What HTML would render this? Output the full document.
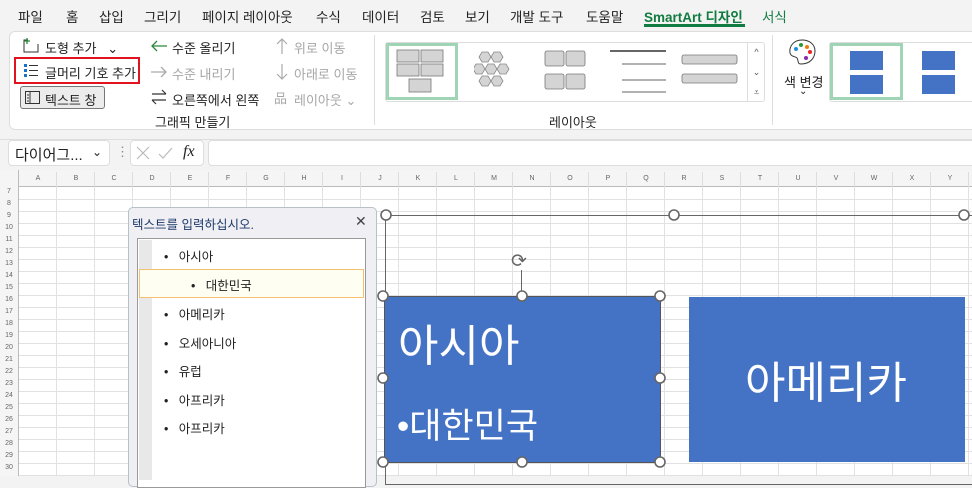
<!DOCTYPE html><html><head><meta charset="utf-8"><style>
*{margin:0;padding:0;box-sizing:border-box}
body{width:972px;height:476px;overflow:hidden;background:#f3f3f3;font-family:"Liberation Sans","Noto Sans CJK KR",sans-serif;font-size:13px;color:#222;position:relative}
.a{position:absolute;white-space:nowrap}
.g{color:#a6a6a6}
.tab{top:6px;font-size:13.5px}
</style></head><body>
<!-- tabs -->
<div class="a tab" style="left:18px">파일</div>
<div class="a tab" style="left:66px">홈</div>
<div class="a tab" style="left:99px">삽입</div>
<div class="a tab" style="left:144px">그리기</div>
<div class="a tab" style="left:202px">페이지 레이아웃</div>
<div class="a tab" style="left:316px">수식</div>
<div class="a tab" style="left:362px">데이터</div>
<div class="a tab" style="left:420px">검토</div>
<div class="a tab" style="left:465px">보기</div>
<div class="a tab" style="left:510px">개발 도구</div>
<div class="a tab" style="left:586px">도움말</div>
<div class="a tab" style="left:644px;color:#107c41;font-weight:bold">SmartArt 디자인</div>
<div class="a" style="left:644px;top:24px;width:101px;height:3px;background:#107c41"></div>
<div class="a tab" style="left:762px;color:#107c41">서식</div>
<!-- ribbon -->
<div class="a" style="left:9px;top:31px;width:975px;height:99px;background:#fff;border:1px solid #ddd;border-radius:6px"></div>
<svg class="a" style="left:22px;top:37px" width="20" height="18"><path d="M6 3H2v12h14V7" fill="none" stroke="#333"/><path d="M5 1v6M2 4h6" stroke="#2a8a3a" stroke-width="1.3"/></svg>
<div class="a" style="left:45px;top:38px">도형 추가 &nbsp;&nbsp;⌄</div>
<div class="a" style="left:14px;top:57px;width:126px;height:27px;border:2px solid #e0131f"></div>
<svg class="a" style="left:23px;top:63px" width="16" height="15"><rect x="1" y="1" width="3" height="3" fill="#1a73c8"/><rect x="1" y="6" width="3" height="3" fill="#1a73c8"/><rect x="1" y="11" width="3" height="3" fill="#1a73c8"/><path d="M6 2.5h9M6 7.5h9M6 12.5h9" stroke="#333"/></svg>
<div class="a" style="left:45px;top:63px">글머리 기호 추가</div>
<div class="a" style="left:20px;top:86px;width:85px;height:23px;border:1px solid #777;border-radius:3px;background:#ececec"></div>
<svg class="a" style="left:25px;top:91px" width="15" height="13"><rect x=".5" y=".5" width="14" height="12" fill="none" stroke="#333"/><path d="M5 1v12M2 4h2M2 7h2M2 10h2" stroke="#333"/></svg>
<div class="a" style="left:45px;top:90px">텍스트 창</div>
<svg class="a" style="left:150px;top:40px" width="18" height="12"><path d="M17 6H2M7 1L2 6l5 5" fill="none" stroke="#2a8a3a" stroke-width="1.3"/></svg><div class="a" style="left:172px;top:38px">수준 올리기</div>
<svg class="a" style="left:150px;top:66px" width="18" height="12"><path d="M1 6h15M11 1l5 5-5 5" fill="none" stroke="#aaa" stroke-width="1.3"/></svg><div class="a g" style="left:172px;top:64px">수준 내리기</div>
<svg class="a" style="left:150px;top:89px" width="18" height="16"><path d="M2 5h14M12 1l4 4M16 11H2M6 15l-4-4" fill="none" stroke="#333" stroke-width="1.2"/></svg><div class="a" style="left:172px;top:90px">오른쪽에서 왼쪽</div>
<div class="a" style="left:155px;top:112px">그래픽 만들기</div>
<svg class="a" style="left:276px;top:37px" width="12" height="18"><path d="M6 17V2M1 7l5-5 5 5" fill="none" stroke="#aaa" stroke-width="1.2"/></svg><div class="a g" style="left:294px;top:38px">위로 이동</div>
<svg class="a" style="left:276px;top:63px" width="12" height="18"><path d="M6 1v15M1 11l5 5 5-5" fill="none" stroke="#aaa" stroke-width="1.2"/></svg><div class="a g" style="left:294px;top:64px">아래로 이동</div>
<div class="a g" style="left:274px;top:88px">品</div><div class="a g" style="left:294px;top:90px">레이아웃 ⌄</div>
<div class="a" style="left:374px;top:35px;width:1px;height:90px;background:#ddd"></div>
<div class="a" style="left:385px;top:42px;width:380px;height:60px;border:1px solid #ddd;border-radius:3px"></div>
<div class="a" style="left:386px;top:43px;width:72px;height:57px;border:3px solid #9fd4b4"></div>
<svg class="a" style="left:396px;top:48px" width="52" height="46" fill="#d4d4d4" stroke="#777" stroke-width=".8"><rect x="1" y="2" width="22" height="12"/><rect x="25" y="2" width="22" height="12"/><rect x="1" y="16" width="22" height="12"/><rect x="25" y="16" width="22" height="12"/><rect x="13" y="31" width="22" height="13"/></svg>
<svg class="a" style="left:474px;top:50px" width="40" height="42" fill="#d4d4d4" stroke="#888" stroke-width=".8"><polygon points="8,2 14,2 17,7 14,12 8,12 5,7"/><polygon points="20,2 26,2 29,7 26,12 20,12 17,7"/><polygon points="2,14 8,14 11,19 8,24 2,24 -1,19"/><polygon points="14,14 20,14 23,19 20,24 14,24 11,19"/><polygon points="26,14 32,14 35,19 32,24 26,24 23,19"/><polygon points="8,26 14,26 17,31 14,36 8,36 5,31"/><polygon points="20,26 26,26 29,31 26,36 20,36 17,31"/></svg>
<svg class="a" style="left:544px;top:50px" width="44" height="44" fill="#d4d4d4" stroke="#777" stroke-width=".8"><rect x="1" y="1" width="19" height="15" rx="2"/><rect x="22" y="1" width="19" height="15" rx="2"/><rect x="1" y="24" width="19" height="15" rx="2"/><rect x="22" y="24" width="19" height="15" rx="2"/></svg>
<svg class="a" style="left:610px;top:49px" width="60" height="45" stroke="#666"><path d="M0 2h56" stroke-width="2"/><path d="M12 15h44M12 31h44M12 43h44"/></svg>
<svg class="a" style="left:681px;top:53px" width="58" height="36" fill="#d4d4d4" stroke="#777" stroke-width=".8"><rect x="1" y="2" width="55" height="9" rx="2"/><rect x="1" y="21" width="55" height="9" rx="2"/></svg>
<div class="a" style="left:747px;top:42px;width:18px;height:60px;border-left:1px solid #ddd;font-size:9px;text-align:center;line-height:20px;color:#555">^<br>⌄<br>⩡</div>
<div class="a" style="left:549px;top:112px">레이아웃</div>
<div class="a" style="left:772px;top:35px;width:1px;height:90px;background:#ddd"></div>
<svg class="a" style="left:787px;top:38px" width="30" height="28"><path d="M15 2C6 2 2 9 3 15c1 4 5 3 7 5 2 3 0 6 4 6 9 0 14-6 14-13C28 6 22 2 15 2z" fill="#fff" stroke="#333"/><circle cx="9" cy="11" r="2" fill="#1f8fdc"/><circle cx="14" cy="7" r="2" fill="#2a9a3a"/><circle cx="20" cy="9" r="2" fill="#f07a0a"/><circle cx="23" cy="14" r="2" fill="#e22"/><circle cx="19" cy="20" r="2" fill="#8a2ab0"/></svg>
<div class="a" style="left:784px;top:72px">색 변경</div>
<div class="a" style="left:799px;top:86px;font-size:10px">⌄</div>
<div class="a" style="left:829px;top:42px;width:150px;height:60px;border:1px solid #ddd;border-radius:3px"></div>
<div class="a" style="left:830px;top:43px;width:73px;height:57px;border:3px solid #9fd4b4"></div>
<div class="a" style="left:850px;top:51px;width:33px;height:19px;background:#4472c4"></div>
<div class="a" style="left:850px;top:75px;width:33px;height:19px;background:#4472c4"></div>
<div class="a" style="left:922px;top:51px;width:33px;height:19px;background:#4472c4"></div>
<div class="a" style="left:922px;top:75px;width:33px;height:19px;background:#4472c4"></div>
<div class="a" style="left:0;top:131px;width:972px;height:9px;background:#f3f3f3;border-bottom:1px solid #ddd"></div>
<!-- formula bar -->
<div class="a" style="left:8px;top:140px;width:102px;height:26px;background:#fff;border:1px solid #ddd;border-radius:4px"></div>
<div class="a" style="left:15px;top:144px;font-size:15px">다이어그...</div>
<div class="a" style="left:92px;top:145px;font-size:12px">⌄</div>
<div class="a" style="left:116px;top:144px;color:#888">⋮</div>
<div class="a" style="left:130px;top:140px;width:74px;height:26px;background:#fff;border:1px solid #ddd;border-radius:4px"></div>
<svg class="a" style="left:135px;top:145px" width="42" height="16" fill="none" stroke="#bbb" stroke-width="1.2"><path d="M2 2l12 12M14 2L2 14M24 9l4 4 9-10"/></svg>
<div class="a" style="left:183px;top:143px;font-size:16px;font-style:italic;font-family:'Liberation Serif',serif">fx</div>
<div class="a" style="left:208px;top:140px;width:780px;height:26px;background:#fff;border:1px solid #ddd;border-radius:4px"></div>
<!-- grid -->
<div class="a" style="left:0;top:170px;width:972px;height:306px;background:#fff"></div>
<div class="a" style="left:19px;top:187px;width:953px;height:289px;background:repeating-linear-gradient(90deg,transparent 0 37px,#e1e1e1 37px 38px),repeating-linear-gradient(180deg,transparent 0 11px,#e1e1e1 11px 12px);background-position:0 0,0 1px"></div>
<div class="a" style="left:0;top:170px;width:972px;height:17px;background:#f5f5f5;border-bottom:1px solid #bbb"></div>
<div class="a" style="left:0;top:170px;width:19px;height:306px;background:#f5f5f5;border-right:1px solid #bbb"></div>
<div id="cols"></div>
<script>
var c="ABCDEFGHIJKLMNOPQRSTUVWXY",h="";
for(var i=0;i<25;i++)h+='<div class="a" style="left:'+(19+38*i)+'px;top:175px;width:38px;text-align:center;font-size:7px;color:#666">'+c[i]+'</div><div class="a" style="left:'+(56+38*i)+'px;top:172px;width:1px;height:15px;background:#ddd"></div>';
for(var r=7;r<=30;r++)h+='<div class="a" style="left:0;top:'+(188+(r-7)*12)+'px;width:18px;text-align:center;font-size:7px;color:#666">'+r+'</div>';
document.getElementById('cols').innerHTML=h;
</script>
<!-- text pane -->
<div class="a" style="left:128px;top:207px;width:249px;height:280px;background:#efeff4;border:1px solid #b8c0c8;border-radius:5px"></div>
<div class="a" style="left:132px;top:214px;color:#1f3a6a;font-size:12.5px">텍스트를 입력하십시오.</div>
<div class="a" style="left:355px;top:213px;font-size:14px;color:#444">✕</div>
<div class="a" style="left:137px;top:238px;width:229px;height:250px;background:#fff;border:1px solid #999"></div>
<div class="a" style="left:139px;top:240px;width:13px;height:240px;background:#e8e8e8"></div>
<div class="a" style="left:139px;top:269px;width:225px;height:29px;background:#fffef3;border:1px solid #f5c070"></div>
<div class="a" style="left:164px;top:246px;font-size:12.5px">•&nbsp;&nbsp;&nbsp;아시아</div>
<div class="a" style="left:191px;top:275px;font-size:12.5px">•&nbsp;&nbsp;&nbsp;대한민국</div>
<div class="a" style="left:164px;top:304px;font-size:12.5px">•&nbsp;&nbsp;&nbsp;아메리카</div>
<div class="a" style="left:164px;top:333px;font-size:12.5px">•&nbsp;&nbsp;&nbsp;오세아니아</div>
<div class="a" style="left:164px;top:361px;font-size:12.5px">•&nbsp;&nbsp;&nbsp;유럽</div>
<div class="a" style="left:164px;top:390px;font-size:12.5px">•&nbsp;&nbsp;&nbsp;아프리카</div>
<div class="a" style="left:164px;top:418px;font-size:12.5px">•&nbsp;&nbsp;&nbsp;아프리카</div>
<!-- smartart -->
<div class="a" style="left:385px;top:215px;width:590px;height:270px;border:1px solid #666"></div>
<div class="a" style="left:384px;top:296px;width:277px;height:167px;background:#4472c4;border:1px solid #555"></div>
<div class="a" style="left:689px;top:297px;width:276px;height:165px;background:#4472c4"></div>
<div class="a" style="left:398px;top:310px;color:#fff;font-size:44px">아시아</div>
<div class="a" style="left:397px;top:398px;color:#fff;font-size:35px">•대한민국</div>
<div class="a" style="left:745px;top:347px;color:#fff;font-size:44px">아메리카</div>
<div class="a" style="left:521px;top:270px;width:1px;height:26px;background:#666"></div>
<div class="a" style="left:511px;top:250px;font-size:19px;color:#666">⟳</div>
<svg class="a" style="left:370px;top:200px" width="602" height="276" fill="#fff" stroke="#666" stroke-width="1.6">
<circle cx="16" cy="15" r="5"/><circle cx="304" cy="15" r="5"/><circle cx="594" cy="15" r="5"/>
<circle cx="13" cy="96" r="5"/><circle cx="152" cy="96" r="5"/><circle cx="290" cy="96" r="5"/>
<circle cx="13" cy="178" r="5"/><circle cx="290" cy="178" r="5"/>
<circle cx="13" cy="262" r="5"/><circle cx="152" cy="262" r="5"/><circle cx="290" cy="262" r="5"/>
</svg>
</body></html>
